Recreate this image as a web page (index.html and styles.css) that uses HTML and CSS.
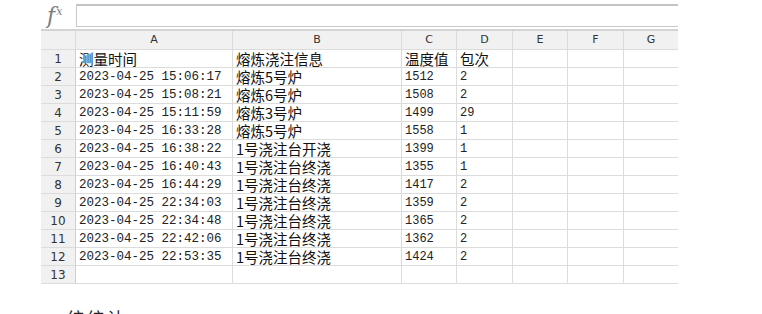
FILE: index.html
```html
<!DOCTYPE html>
<html lang="zh">
<head>
<meta charset="utf-8">
<link rel="stylesheet" href="styles.css">
</head>
<body>
<div class="sheet">
  <div class="fbar">
    <div class="fx"><span class="f">f</span><span class="x">x</span></div>
    <div class="finput"></div>
  </div>
  <div class="grid">
    <div class="hd corner"></div><div class="hd">A</div><div class="hd">B</div><div class="hd">C</div><div class="hd">D</div><div class="hd">E</div><div class="hd">F</div><div class="hd">G</div>

    <div class="rn">1</div><div class="c zh">测量时间</div><div class="c zh">熔炼浇注信息</div><div class="c zh">温度值</div><div class="c zh">包次</div><div class="c"></div><div class="c"></div><div class="c"></div>
    <div class="rn">2</div><div class="c dt">2023-04-25 15:06:17</div><div class="c zh">熔炼5号炉</div><div class="c num">1512</div><div class="c num">2</div><div class="c"></div><div class="c"></div><div class="c"></div>
    <div class="rn">3</div><div class="c dt">2023-04-25 15:08:21</div><div class="c zh">熔炼6号炉</div><div class="c num">1508</div><div class="c num">2</div><div class="c"></div><div class="c"></div><div class="c"></div>
    <div class="rn">4</div><div class="c dt">2023-04-25 15:11:59</div><div class="c zh">熔炼3号炉</div><div class="c num">1499</div><div class="c num">29</div><div class="c"></div><div class="c"></div><div class="c"></div>
    <div class="rn">5</div><div class="c dt">2023-04-25 16:33:28</div><div class="c zh">熔炼5号炉</div><div class="c num">1558</div><div class="c num">1</div><div class="c"></div><div class="c"></div><div class="c"></div>
    <div class="rn">6</div><div class="c dt">2023-04-25 16:38:22</div><div class="c zh">1号浇注台开浇</div><div class="c num">1399</div><div class="c num">1</div><div class="c"></div><div class="c"></div><div class="c"></div>
    <div class="rn">7</div><div class="c dt">2023-04-25 16:40:43</div><div class="c zh">1号浇注台终浇</div><div class="c num">1355</div><div class="c num">1</div><div class="c"></div><div class="c"></div><div class="c"></div>
    <div class="rn">8</div><div class="c dt">2023-04-25 16:44:29</div><div class="c zh">1号浇注台终浇</div><div class="c num">1417</div><div class="c num">2</div><div class="c"></div><div class="c"></div><div class="c"></div>
    <div class="rn">9</div><div class="c dt">2023-04-25 22:34:03</div><div class="c zh">1号浇注台终浇</div><div class="c num">1359</div><div class="c num">2</div><div class="c"></div><div class="c"></div><div class="c"></div>
    <div class="rn">10</div><div class="c dt">2023-04-25 22:34:48</div><div class="c zh">1号浇注台终浇</div><div class="c num">1365</div><div class="c num">2</div><div class="c"></div><div class="c"></div><div class="c"></div>
    <div class="rn">11</div><div class="c dt">2023-04-25 22:42:06</div><div class="c zh">1号浇注台终浇</div><div class="c num">1362</div><div class="c num">2</div><div class="c"></div><div class="c"></div><div class="c"></div>
    <div class="rn">12</div><div class="c dt">2023-04-25 22:53:35</div><div class="c zh">1号浇注台终浇</div><div class="c num">1424</div><div class="c num">2</div><div class="c"></div><div class="c"></div><div class="c"></div>
    <div class="rn">13</div><div class="c"></div><div class="c"></div><div class="c"></div><div class="c"></div><div class="c"></div><div class="c"></div><div class="c"></div>
  </div>
  <p class="after">统统计</p>
</div>
</body>
</html>
```

FILE: styles.css
```css
html, body {
  margin: 0;
  padding: 0;
  background: #ffffff;
  overflow: hidden;
}
body {
  width: 762px;
  height: 314px;
  font-family: "Noto Sans CJK SC", "Noto Sans", sans-serif;
}
.sheet {
  padding: 4px 0 0 41px;
  width: 637px;
  height: 310px;
  overflow: hidden;
}
.fbar {
  display: flex;
  height: 23px;
}
.fx {
  width: 35px;
  box-sizing: border-box;
  padding: 1px 0 0 6px;
  display: flex;
  align-items: flex-start;
  font-family: "DejaVu Serif", serif;
  font-style: italic;
  color: #7c7c7c;
}
.fx .f {
  font-size: 22px;
  line-height: 22px;
}
.fx .x {
  font-size: 11px;
  line-height: 11px;
  margin-left: 1px;
  margin-top: 1px;
}
.finput {
  flex: 1;
  box-sizing: border-box;
  border: 1px solid #c8c8c8;
  border-right: none;
  border-top: 2px solid #c4c4c4;
  background: #fff;
}
.grid {
  margin-top: 2px;
  display: grid;
  grid-template-columns: 35px 157px 169px 55px 56px 55px 56px 54px;
  grid-template-rows: 19px repeat(13, 18px);
  border-top: 2px solid #d4d4d4;
}
.grid > div {
  box-sizing: border-box;
  border-right: 1px solid #dcdcdc;
  border-bottom: 1px solid #dcdcdc;
  white-space: nowrap;
}
.grid > div:nth-child(8n) {
  border-right: none;
}
.hd {
  background: #f1f1f1;
  text-align: center;
  font-family: "DejaVu Sans", sans-serif;
  font-size: 11px;
  line-height: 18px;
  color: #333;
}
.rn {
  background: #f1f1f1;
  text-align: center;
  font-family: "DejaVu Sans", sans-serif;
  font-size: 12px;
  line-height: 18px;
  color: #333;
  border-right: 1px solid #cfcfcf !important;
}
.c {
  padding-left: 3px;
  color: #111;
}
.zh {
  font-size: 14.5px;
  line-height: 17px;
}
.dt {
  font-family: "Liberation Mono", monospace;
  font-size: 12.5px;
  line-height: 18px;
  color: #222;
}
.num {
  font-family: "Liberation Mono", monospace;
  font-size: 12px;
  line-height: 19px;
  color: #222;
}
.after {
  margin: 24px 0 0 26px;
  font-size: 17px;
  line-height: 20px;
  letter-spacing: 3px;
  color: #222;
}
```
